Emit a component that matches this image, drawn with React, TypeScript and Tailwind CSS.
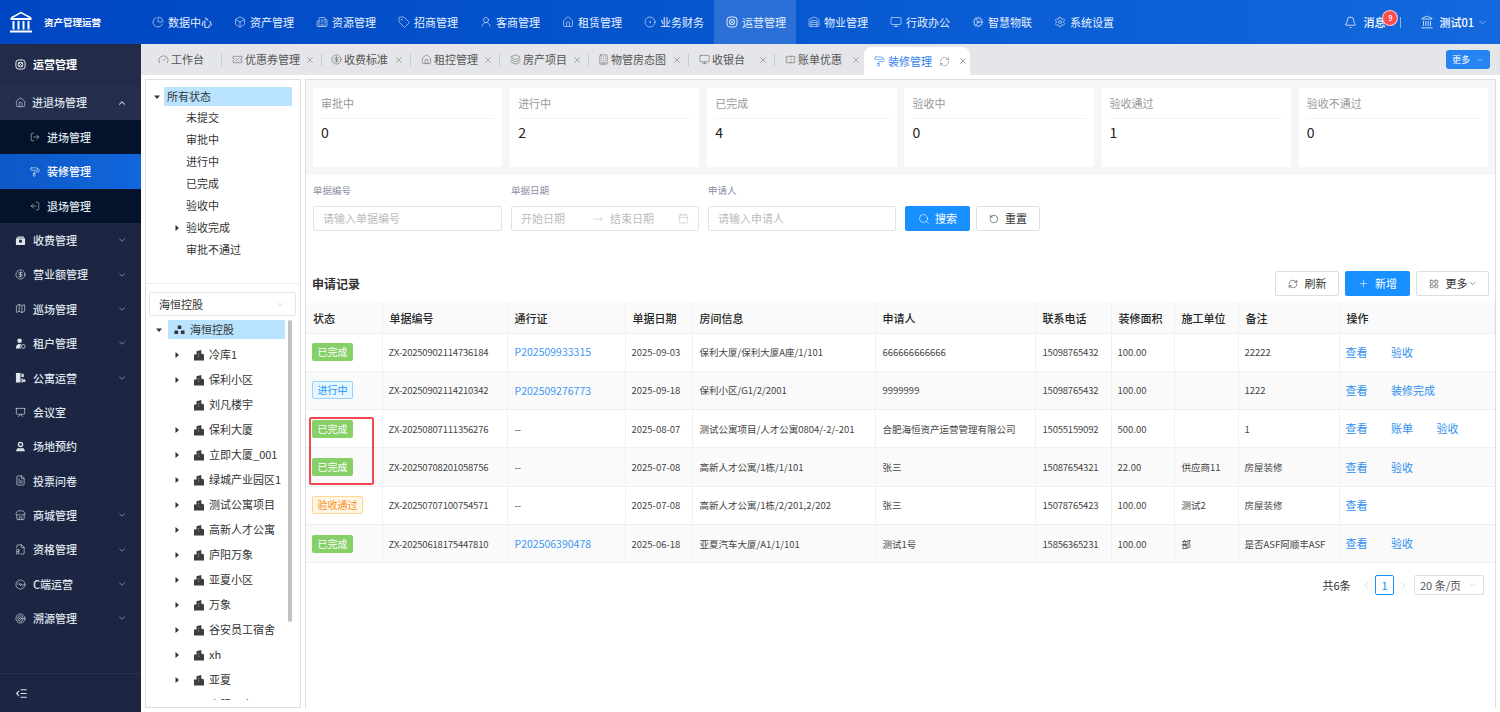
import {
  Box, Building, Building2, Calendar, Bell, ChevronDown, ChevronLeft, ChevronRight, ChevronUp,
  CircleDollarSign, CircleDot, Cog, Disc3, FileBadge, FileText, Gauge, House, Layers, LayoutGrid,
  LogOut, Map, Monitor, MoveRight, PaintRoller, PieChart, Plus, Presentation, RefreshCw, RotateCcw, Search, Settings,
  Store, Tag, TicketPercent, Target, UserRound, X, IndentDecrease, Landmark, Warehouse, Ticket,
} from 'lucide-react'

function OpsIcon({ className }: { className?: string }) {
  return (
    <svg viewBox="0 0 12 12" className={`fill-none stroke-current ${className ?? ''}`} strokeWidth="1">
      <rect x="1" y="1" width="10" height="10" rx="3" />
      <circle cx="6" cy="6" r="2.600" />
      <path d="M3.500 3.500 6 6M8.500 3.500 6 6M8.500 8.500 6 6M3.500 8.500 6 6" strokeWidth="0.700" />
    </svg>
  )
}

function WalletFill({ className }: { className?: string }) {
  return (
    <svg viewBox="0 0 12 12" className={`fill-current ${className ?? ''}`}>
      <path fillRule="evenodd" d="M2.500 1.500h7l.5 1.500H2ZM1 3.500h10V10a1 1 0 0 1-1 1H2a1 1 0 0 1-1-1ZM6 5a1.700 1.700 0 1 0 0 3.400A1.700 1.700 0 0 0 6 5Z" />
    </svg>
  )
}

function TenantFill({ className }: { className?: string }) {
  return (
    <svg viewBox="0 0 12 12" className={`fill-current ${className ?? ''}`}>
      <circle cx="5" cy="3" r="2.500" />
      <path d="M1 11.500c0-3.500 1.500-5 4-5 1 0 1.700.2 2.300.7A3 3 0 0 0 6.500 11.500Z" />
      <circle cx="9" cy="9.200" r="2" fill="none" stroke="currentColor" strokeWidth="0.900" />
    </svg>
  )
}

function FlatsFill({ className }: { className?: string }) {
  return (
    <svg viewBox="0 0 12 12" className={`fill-current ${className ?? ''}`}>
      <path d="M1 1h5v10.500H1Z" />
      <path d="M7 2h2.500v3.500H7ZM7 7h1.500v4.500H7Z" />
      <circle cx="10" cy="9.500" r="1.500" />
    </svg>
  )
}

function BookFill({ className }: { className?: string }) {
  return (
    <svg viewBox="0 0 12 12" className={`fill-current ${className ?? ''}`}>
      <path fillRule="evenodd" d="M6 .8a3 3 0 1 0 0 6 3 3 0 0 0 0-6Zm0 1.500a1.500 1.500 0 1 1 0 3 1.500 1.500 0 0 1 0-3Z" />
      <path d="M2.500 8h7l1.500 3.200H1Z" />
    </svg>
  )
}

const NAV = [
  { label: '数据中心', icon: PieChart },
  { label: '资产管理', icon: Box },
  { label: '资源管理', icon: Building2 },
  { label: '招商管理', icon: Tag },
  { label: '客商管理', icon: UserRound },
  { label: '租赁管理', icon: House },
  { label: '业务财务', icon: CircleDot },
  { label: '运营管理', icon: OpsIcon, active: true },
  { label: '物业管理', icon: Warehouse },
  { label: '行政办公', icon: Monitor },
  { label: '智慧物联', icon: Cog },
  { label: '系统设置', icon: Settings },
]

const TABS = [
  { label: '工作台', icon: Gauge, cls: 'w-[74px] pl-[10px]', close: false },
  { label: '优惠券管理', icon: TicketPercent, cls: 'w-[100px] pl-[10px]', close: true },
  { label: '收费标准', icon: CircleDollarSign, cls: 'w-[89px] pl-[9px]', close: true },
  { label: '租控管理', icon: House, cls: 'w-[89px] pl-[10px]', close: true },
  { label: '房产项目', icon: Layers, cls: 'w-[89px] pl-[10px]', close: true },
  { label: '物管房态图', icon: Building, cls: 'w-[100px] pl-[9px]', close: true },
  { label: '收银台', icon: Monitor, cls: 'w-[86px] pl-[10px]', close: true },
  { label: '账单优惠', icon: Ticket, cls: 'w-[89px] pl-[10px]', close: true },
]

const SIDE = [
  { label: '收费管理', icon: WalletFill, arrow: true },
  { label: '营业额管理', icon: CircleDollarSign, arrow: true },
  { label: '巡场管理', icon: Map, arrow: true },
  { label: '租户管理', icon: TenantFill, arrow: true },
  { label: '公寓运营', icon: FlatsFill, arrow: true },
  { label: '会议室', icon: Presentation, arrow: false },
  { label: '场地预约', icon: BookFill, arrow: false },
  { label: '投票问卷', icon: FileText, arrow: false },
  { label: '商城管理', icon: Store, arrow: true },
  { label: '资格管理', icon: FileBadge, arrow: true },
  { label: 'C端运营', icon: Disc3, arrow: true },
  { label: '溯源管理', icon: Target, arrow: true },
]

const STATUS = ['未提交', '审批中', '进行中', '已完成', '验收中', '验收完成', '审批不通过']
const PROJECTS = ['冷库1', '保利小区', '刘凡楼宇', '保利大厦', '立即大厦_001', '绿城产业园区1', '测试公寓项目', '高新人才公寓', '庐阳万象', '亚夏小区', '万象', '谷安员工宿舍', 'xh', '亚夏', '合肥公寓']

const CARDS = [
  { label: '审批中', value: 0 },
  { label: '进行中', value: 2 },
  { label: '已完成', value: 4 },
  { label: '验收中', value: 0 },
  { label: '验收通过', value: 1 },
  { label: '验收不通过', value: 0 },
]

const ROWS = [
  { status: 'done', no: 'ZX-20250902114736184', pass: 'P202509933315', date: '2025-09-03', room: '保利大厦/保利大厦A座/1/101', user: '666666666666', tel: '15098765432', area: '100.00', unit: '', note: '22222', ops: ['查看', '验收'] },
  { status: 'doing', no: 'ZX-20250902114210342', pass: 'P202509276773', date: '2025-09-18', room: '保利小区/G1/2/2001', user: '9999999', tel: '15098765432', area: '100.00', unit: '', note: '1222', ops: ['查看', '装修完成'] },
  { status: 'done', no: 'ZX-20250807111356276', pass: '--', date: '2025-08-07', room: '测试公寓项目/人才公寓0804/-2/-201', user: '合肥海恒资产运营管理有限公司', tel: '15055159092', area: '500.00', unit: '', note: '1', ops: ['查看', '账单', '验收'] },
  { status: 'done', no: 'ZX-20250708201058756', pass: '--', date: '2025-07-08', room: '高新人才公寓/1栋/1/101', user: '张三', tel: '15087654321', area: '22.00', unit: '供应商11', note: '房屋装修', ops: ['查看', '验收'] },
  { status: 'passed', no: 'ZX-20250707100754571', pass: '--', date: '2025-07-08', room: '高新人才公寓/1栋/2/201,2/202', user: '张三', tel: '15078765423', area: '100.00', unit: '测试2', note: '房屋装修', ops: ['查看'] },
  { status: 'done', no: 'ZX-20250618175447810', pass: 'P202506390478', date: '2025-06-18', room: '亚夏汽车大厦/A1/1/101', user: '测试1号', tel: '15856365231', area: '100.00', unit: '部', note: '是否ASF阿顺丰ASF', ops: ['查看', '验收'] },
]

const HEADERS = [
  { label: '状态', cls: 'w-[76px]' },
  { label: '单据编号', cls: 'w-[125px]' },
  { label: '通行证', cls: 'w-[118px]' },
  { label: '单据日期', cls: 'w-[67px]' },
  { label: '房间信息', cls: 'w-[183px]' },
  { label: '申请人', cls: 'w-[160px]' },
  { label: '联系电话', cls: 'w-[76px]' },
  { label: '装修面积', cls: 'w-[63px]' },
  { label: '施工单位', cls: 'w-[64px]' },
  { label: '备注', cls: 'w-[101px]' },
  { label: '操作', cls: '' },
]

function StatusTag({ status }: { status: string }) {
  if (status === 'doing') return <span className="block h-[18px] w-[41px] rounded-[2px] border border-[#91d5ff] bg-[#e6f7ff] text-center text-[10px] leading-[16px] text-[#1890ff]">进行中</span>
  if (status === 'passed') return <span className="block h-[18px] w-[51px] rounded-[2px] border border-[#ffd591] bg-[#fff7e6] text-center text-[10px] leading-[16px] text-[#fa8c16]">验收通过</span>
  return <span className="block h-[18px] w-[41px] rounded-[2px] bg-[#87d068] text-center text-[10px] leading-[18px] text-white">已完成</span>
}

function Arrow({ open }: { open?: boolean }) {
  return (
    <svg viewBox="0 0 8 8" className="h-[8px] w-[8px] fill-[#333]">
      {open ? <polygon points="1,2.500 7,2.500 4,6" /> : <polygon points="2.500,1 6,4 2.500,7" />}
    </svg>
  )
}

function BuildingMark() {
  return (
    <svg viewBox="0 0 12 12" className="h-[12px] w-[12px] shrink-0 fill-[#3d3d3d]">
      <path d="M1 11.500V5.500H3.500V2.200L8.300 1V4.500L11 5.500V11.500Z" />
      <path d="M5 4h1.200v1.200H5ZM5 6.500h1.200v1.200H5Z" fill="#8a8a8a" />
    </svg>
  )
}

function OrgMark() {
  return (
    <svg viewBox="0 0 12 12" className="h-[11px] w-[11px] shrink-0 fill-[#333]">
      <rect x="4" y="1.500" width="4" height="4" rx="0.500" />
      <rect x="0.500" y="7" width="4" height="4" rx="0.500" />
      <rect x="7.500" y="7" width="4" height="4" rx="0.500" />
    </svg>
  )
}

function Logo() {
  return (
    <svg viewBox="0 0 24 24" className="h-[24px] w-[24px] fill-none stroke-white" strokeWidth="1.500">
      <path d="M2 8 12 2.500 22 8" />
      <path d="M1.500 9h21" strokeWidth="2" />
      <path d="M4.500 11v8.500M9.500 11v8.500M14.500 11v8.500M19.500 11v8.500" strokeWidth="2" />
      <path d="M1 21.500h22" strokeWidth="2" />
    </svg>
  )
}

export default function App() {
  return (
    <div className="flex h-[712px] w-[1500px] flex-col overflow-hidden bg-white font-['Noto_Sans_CJK_SC','Noto_Sans',sans-serif] text-[11px]">
      {/* top bar */}
      <header className="flex h-[44px] shrink-0 items-center bg-gradient-to-r from-[#0046c3] to-[#1268dc] text-white">
        <div className="flex w-[140px] shrink-0 items-center pl-[9px]">
          <Logo />
          <span className="ml-[11px] text-[9.500px] font-bold">资产管理运营</span>
        </div>
        {NAV.map(n => (
          <div key={n.label} className={`flex h-full w-[82px] shrink-0 items-center gap-[4px] pl-[12px] ${n.active ? 'bg-white/15' : ''}`}>
            <n.icon className="h-[12px] w-[12px] opacity-85" strokeWidth={1.3} />
            <span className="text-[#e8f0ff]">{n.label}</span>
          </div>
        ))}
        <div className="ml-auto flex items-center pr-[12px]">
          <Bell className="h-[13px] w-[13px]" strokeWidth={1.4} />
          <span className="relative ml-[6px] font-medium">
            消息
            <span className="absolute -right-[13px] -top-[4px] flex h-[16px] w-[16px] items-center justify-center rounded-full border border-white/70 bg-[#ff4d4f] text-[7px]">9</span>
          </span>
          <span className="ml-[15px] h-[11px] w-px bg-white/50" />
          <Landmark className="ml-[19px] h-[14px] w-[14px]" strokeWidth={1.3} />
          <span className="ml-[5px] font-medium">测试01</span>
          <ChevronDown className="ml-[3px] h-[11px] w-[11px] opacity-80" strokeWidth={1.3} />
        </div>
      </header>

      <div className="flex min-h-0 flex-1">
        {/* sidebar */}
        <aside className="flex w-[141px] shrink-0 flex-col bg-[#1c2541] text-[#dfe3ec]">
          <div className="flex h-[41px] items-center gap-[7px] bg-[#222b47] pl-[15px] font-bold text-white">
            <OpsIcon className="h-[11px] w-[11px]" />
            运营管理
          </div>
          <div className="flex h-[35px] items-center gap-[6px] bg-[#252e4c] pl-[15px] pr-[14px] font-medium">
            <House className="h-[11px] w-[11px]" strokeWidth={1.3} />
            进退场管理
            <ChevronUp className="ml-auto h-[10px] w-[10px]" strokeWidth={2.5} />
          </div>
          <div className="flex h-[34px] items-center gap-[7px] bg-[#02132b] pl-[30px] font-medium">
            <LogOut className="h-[10px] w-[10px]" strokeWidth={1.3} />
            进场管理
          </div>
          <div className="flex h-[35px] items-center gap-[7px] bg-gradient-to-r from-[#0c58c6] to-[#1166dc] pl-[30px] font-medium text-white">
            <PaintRoller className="h-[10px] w-[10px]" strokeWidth={1.3} />
            装修管理
          </div>
          <div className="flex h-[34px] items-center gap-[7px] bg-[#02132b] pl-[30px] font-medium">
            <LogOut className="h-[10px] w-[10px] -scale-x-100" strokeWidth={1.3} />
            退场管理
          </div>
          {SIDE.map(s => (
            <div key={s.label} className="flex h-[34.400px] items-center gap-[7px] pl-[15px] pr-[14px] font-medium">
              <s.icon className="h-[11px] w-[11px]" strokeWidth={1.4} />
              {s.label}
              {s.arrow && <ChevronDown className="ml-auto h-[10px] w-[10px] opacity-60" strokeWidth={2} />}
            </div>
          ))}
          <div className="mt-auto flex h-[39px] items-center border-t border-[#262f4b] pl-[15px]">
            <IndentDecrease className="h-[13px] w-[13px]" strokeWidth={2} />
          </div>
        </aside>

        <div className="flex min-w-0 flex-1 flex-col">
          {/* tabs */}
          <div className="flex h-[31px] shrink-0 items-end bg-[#e4e6e9] pl-[7px] text-[#555]">
            {TABS.map((t, i) => (
              <div key={t.label} className={`flex h-[31px] shrink-0 items-center gap-[3px] ${t.cls}`}>
                <t.icon className="h-[11px] w-[11px] text-[#666]" strokeWidth={1.3} />
                <span className="-ml-[1px] whitespace-nowrap">{t.label}</span>
                {t.close && <X className="ml-auto mr-[3px] h-[10px] w-[10px] text-[#777]" strokeWidth={1.4} />}
                {!t.close && <span className="ml-auto" />}
                {i < TABS.length - 1 && <span className="h-[12px] w-px shrink-0 bg-[#b9cce2]" />}
              </div>
            ))}
            <div className="flex h-[28px] w-[106px] shrink-0 items-center gap-[3px] whitespace-nowrap rounded-t-[8px] bg-white pl-[10px] text-[#2f80ed]">
              <PaintRoller className="h-[11px] w-[11px]" strokeWidth={1.3} />
              <span>装修管理</span>
              <RefreshCw className="ml-[4px] h-[11px] w-[11px] text-[#777]" strokeWidth={1.2} />
              <X className="ml-[5px] h-[10px] w-[10px] text-[#666]" strokeWidth={1.4} />
            </div>
            <div className="mb-[6px] ml-auto mr-[10px] flex h-[19px] w-[44px] items-center justify-center gap-[6px] rounded-[3px] bg-[#2584f2] text-[9px] text-white">
              更多
              <ChevronDown className="h-[8px] w-[8px]" strokeWidth={1.5} />
            </div>
          </div>

          <div className="flex min-h-0 flex-1 gap-[4px] px-[4px] pb-[4px] pt-[4px]">
            {/* tree panel */}
            <div className="flex h-[629px] w-[156px] shrink-0 flex-col border border-[#dcdee2] text-[#333]">
              <div className="h-[204px] shrink-0 border-b border-[#eee] pt-[7px]">
                <div className="mb-[-1px] flex h-[19px] items-center pl-[4px]">
                  <span className="flex w-[14px] justify-center"><Arrow open /></span>
                  <span className="flex h-[19px] w-[128px] items-center rounded-[1px] bg-[#bae3ff] pl-[3px]">所有状态</span>
                </div>
                {STATUS.map((s, i) => (
                  <div key={s} className="mt-[3px] flex h-[19px] items-center pl-[22px]">
                    <span className="flex w-[18px] justify-center">{i === 5 && <Arrow />}</span>
                    {s}
                  </div>
                ))}
              </div>
              <div className="relative min-h-0 flex-1 overflow-hidden px-[3px] pt-[8px]">
                <div className="flex h-[24px] w-[147px] items-center justify-between rounded-[2px] border border-[#e3e5e8] px-[9px]">
                  海恒控股
                  <ChevronDown className="h-[11px] w-[11px] text-[#bbb]" strokeWidth={1.2} />
                </div>
                <div className="mt-[1px] h-[383px] overflow-hidden">
                  <div className="flex h-[25px] items-center pl-[3px]">
                    <span className="flex w-[14px] justify-center"><Arrow open /></span>
                    <span className="ml-[2px] flex h-[19px] w-[117px] items-center gap-[5px] rounded-[1px] bg-[#bae3ff] pl-[6px]"><OrgMark />海恒控股</span>
                  </div>
                  {PROJECTS.map((p, i) => (
                    <div key={p} className="flex h-[25px] items-center pl-[21px]">
                      <span className="flex w-[14px] shrink-0 justify-center">{i !== 2 && <Arrow />}</span>
                      <span className="ml-[9px] flex items-center gap-[4px] whitespace-nowrap"><BuildingMark />{p}</span>
                    </div>
                  ))}
                </div>
                <div className="absolute left-[142px] top-[36px] h-[302px] w-[4px] rounded-full bg-[#c1c1c1]" />
              </div>
            </div>

            {/* main panel */}
            <div className="flex w-[1191px] shrink-0 flex-col border border-[#dcdee2] border-b-0">
              <div className="grid h-[95px] shrink-0 grid-cols-6 gap-[7.800px] bg-[#f5f6f8] px-[7px] pb-[8px] pt-[8px]">
                {CARDS.map(c => (
                  <div key={c.label} className="bg-white px-[8px]">
                    <div className="flex h-[31px] items-center border-b border-[#f2f2f2] text-[#999]">{c.label}</div>
                    <div className="mt-[3px] text-[14px] leading-[20px] text-[#222]">{c.value}</div>
                  </div>
                ))}
              </div>

              {/* filters */}
              <div className="flex items-end gap-[9px] px-[7px] pt-[9px]">
                <div className="w-[189px]">
                  <div className="mb-[9px] text-[9.500px] leading-[13px] text-[#8b8fa3]">单据编号</div>
                  <div className="flex h-[25px] items-center rounded-[2px] border border-[#e0e2e6] px-[9px] text-[#bbb]">请输入单据编号</div>
                </div>
                <div className="w-[188px]">
                  <div className="mb-[9px] text-[9.500px] leading-[13px] text-[#8b8fa3]">单据日期</div>
                  <div className="flex h-[25px] items-center rounded-[2px] border border-[#e0e2e6] px-[9px] text-[#bbb]">
                    开始日期
                    <MoveRight className="ml-[28px] h-[10px] w-[10px]" strokeWidth={1.2} />
                    <span className="ml-[7px]">结束日期</span>
                    <Calendar className="ml-auto h-[11px] w-[11px]" strokeWidth={1.1} />
                  </div>
                </div>
                <div className="w-[188px]">
                  <div className="mb-[9px] text-[9.500px] leading-[13px] text-[#8b8fa3]">申请人</div>
                  <div className="flex h-[25px] items-center rounded-[2px] border border-[#e0e2e6] px-[9px] text-[#bbb]">请输入申请人</div>
                </div>
                <div className="flex h-[25px] w-[65px] items-center justify-center gap-[5px] rounded-[2px] bg-[#1890ff] text-white">
                  <Search className="h-[12px] w-[12px]" strokeWidth={1.2} />
                  搜索
                </div>
                <div className="-ml-[3px] flex h-[25px] w-[64px] items-center justify-center gap-[6px] rounded-[2px] border border-[#dcdee2] text-[#333]">
                  <RotateCcw className="h-[10px] w-[10px]" strokeWidth={1.4} />
                  重置
                </div>
              </div>

              {/* list head */}
              <div className="mt-[40px] flex h-[25px] items-center justify-between pl-[6px] pr-[6px]">
                <span className="text-[12px] font-bold text-[#333]">申请记录</span>
                <div className="flex gap-[6px]">
                  <div className="flex h-[25px] w-[64px] items-center justify-center gap-[7px] rounded-[2px] border border-[#dcdee2] text-[#333]">
                    <RefreshCw className="h-[10px] w-[10px]" strokeWidth={1.4} />
                    刷新
                  </div>
                  <div className="flex h-[25px] w-[65px] items-center justify-center gap-[6px] rounded-[2px] bg-[#1890ff] text-white">
                    <Plus className="h-[11px] w-[11px]" strokeWidth={1.3} />
                    新增
                  </div>
                  <div className="flex h-[25px] w-[73px] items-center justify-center rounded-[2px] border border-[#dcdee2] text-[#333]">
                    <LayoutGrid className="mr-[7px] h-[10px] w-[10px]" strokeWidth={1.3} />
                    更多
                    <ChevronDown className="h-[9px] w-[9px]" strokeWidth={1.4} />
                  </div>
                </div>
              </div>

              {/* table */}
              <table className="mt-[7px] w-[1189px] table-fixed border-collapse text-[9.500px] text-[#444]">
                <thead>
                  <tr className="h-[30px] bg-[#fafafa]">
                    {HEADERS.map(h => (
                      <th key={h.label} className={`border-b border-r border-[#f0f0f0] pl-[7px] text-left text-[11px] font-medium text-[#262626] ${h.cls}`}>{h.label}</th>
                    ))}
                  </tr>
                </thead>
                <tbody>
                  {ROWS.map((r, i) => (
                    <tr key={r.no} className={`h-[38.300px] ${i % 2 ? 'bg-[#fafafa]' : 'bg-white'}`}>
                      <td className="border-b border-r border-[#f0f0f0] pl-[6px]"><StatusTag status={r.status} /></td>
                      <td className="whitespace-nowrap border-b border-r border-[#f0f0f0] pl-[6px] tracking-[-0.2px]">{r.no}</td>
                      <td className={`border-b border-r border-[#f0f0f0] pl-[7px] ${r.pass === '--' ? '' : 'text-[10.500px] text-[#3f97f5]'}`}>{r.pass}</td>
                      <td className="border-b border-r border-[#f0f0f0] pl-[6px]">{r.date}</td>
                      <td className="whitespace-nowrap border-b border-r border-[#f0f0f0] pl-[7px]">{r.room}</td>
                      <td className="whitespace-nowrap border-b border-r border-[#f0f0f0] pl-[7px]">{r.user}</td>
                      <td className="border-b border-r border-[#f0f0f0] pl-[7px] tracking-[-0.2px]">{r.tel}</td>
                      <td className="border-b border-r border-[#f0f0f0] pl-[6px]">{r.area}</td>
                      <td className="border-b border-r border-[#f0f0f0] pl-[7px]">{r.unit}</td>
                      <td className="whitespace-nowrap border-b border-r border-[#f0f0f0] pl-[6px]">{r.note}</td>
                      <td className="border-b border-[#f0f0f0] pl-[6px]">
                        <div className="flex text-[11px] text-[#2f8ff0]">
                          {r.ops.map(o => <span key={o} className="min-w-[45.500px] whitespace-nowrap pr-[23px]">{o}</span>)}
                        </div>
                      </td>
                    </tr>
                  ))}
                </tbody>
              </table>

              {/* pagination */}
              <div className="mt-[12px] flex h-[20px] items-center justify-end pr-[11px] text-[#555]">
                <span className="mr-[10px] text-[#333]">共6条</span>
                <ChevronLeft className="h-[11px] w-[11px] text-[#bbb]" strokeWidth={1.3} />
                <span className="mx-[3.500px] flex h-[20px] w-[19px] items-center justify-center rounded-[2px] border border-[#1890ff] text-[#1890ff]">1</span>
                <ChevronRight className="h-[11px] w-[11px] text-[#bbb]" strokeWidth={1.3} />
                <div className="ml-[5.500px] flex h-[20px] w-[70px] items-center justify-between rounded-[2px] border border-[#dcdee2] px-[5px]">
                  20 条/页
                  <ChevronDown className="h-[10px] w-[10px] text-[#bbb]" strokeWidth={1.2} />
                </div>
              </div>
            </div>
          </div>
        </div>
      </div>

      {/* red marker that sits over the table in the screenshot */}
      <div className="absolute left-[309px] top-[417px] h-[68px] w-[65px] rounded-[2px] border-[2px] border-[#f0484e]" />
    </div>
  )
}
